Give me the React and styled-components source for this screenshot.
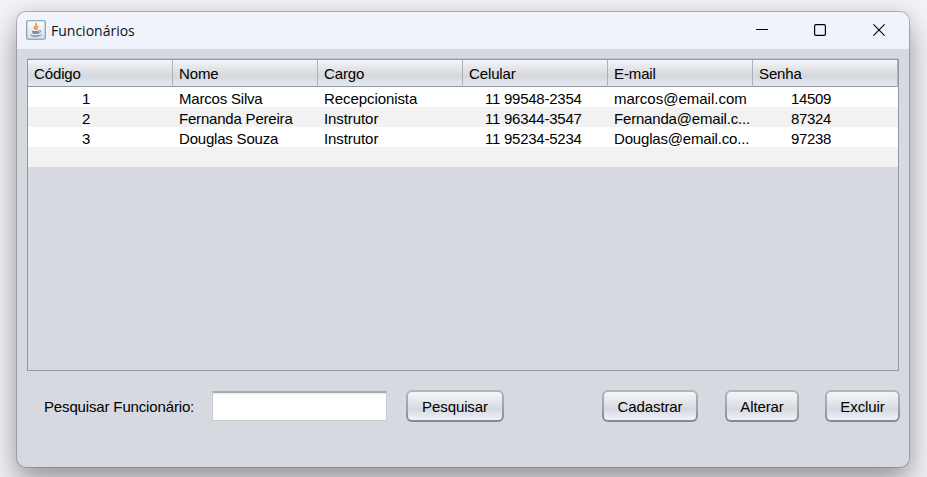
import React from "react";
import styled, { createGlobalStyle } from "styled-components";

const Global = createGlobalStyle`
  * { box-sizing: border-box; }
  html, body { margin: 0; padding: 0; overflow: hidden; }
  body { font-family: "Liberation Sans", Arial, sans-serif; font-size: 15px; color: #000; }
`;

const Desktop = styled.div`
  width: 927px;
  height: 477px;
  padding: 11px 17px 9px 16px;
  background: #f5f2f7;
  overflow: hidden;
`;

const Window = styled.main`
  height: 457px;
  width: 894px;
  display: flex;
  flex-direction: column;
  background: #d6d9e0;
  background-clip: padding-box;
  border: 1px solid rgba(110, 108, 114, 0.45);
  border-radius: 10px;
  overflow: hidden;
  box-shadow: 0 16px 30px rgba(0, 0, 0, 0.34), 0 0 18px rgba(0, 0, 0, 0.08);
`;

const TitleBar = styled.header`
  flex: none;
  height: 37px;
  padding: 0 16px 1px 9px;
  display: flex;
  align-items: center;
  background: #f0f3fb;
`;

const Title = styled.h1`
  margin: 0 auto 0 5px;
  padding-top: 2px;
  font: 400 14px/20px "Open Sans", "Noto Sans", sans-serif;
  color: #111;
`;

const WindowControls = styled.div`
  display: flex;
  gap: 30px;
`;

const ControlButton = styled.button`
  width: 28px;
  height: 28px;
  padding: 0 ${(p) => p.$nudge || 0}px 0 0;
  border: 0;
  background: none;
  display: grid;
  place-items: center;
  svg { display: block; }
`;

const Body = styled.section`
  flex: 1;
  padding: 10px 10px 0;
`;

const TablePane = styled.div`
  height: 312px;
  border: 1px solid #9297a1;
  box-shadow: 0 -1px 0 #c3c6ce;
  width: 872px;
`;

const COLUMNS = "145px 145px 145px 145px 145px 1fr";

const HeaderRow = styled.div`
  display: grid;
  grid-template-columns: ${COLUMNS};
  height: 27px;
  border-bottom: 1px solid #9297a1;
  background: linear-gradient(#f4f5f7 0%, #dfe1e5 40%, #d5d8dd 62%, #e6eaf3 100%);
`;

const HeaderCell = styled.div`
  padding: 1px 0 0 6px;
  line-height: 26px;
  letter-spacing: -0.12px;
  border-right: 1px solid #adb1b9;
`;

const Row = styled.div`
  display: grid;
  grid-template-columns: ${COLUMNS};
  height: 20px;
  background: ${(p) => (p.$striped ? "#f2f2f2" : "#fff")};
`;

const Cell = styled.div`
  padding: 3px 0 0 ${(p) => p.$indent || 6}px;
  line-height: 18px;
  height: 20px;
  white-space: pre;
  letter-spacing: ${(p) => p.$spacing || 0}px;
`;

const Footer = styled.form`
  display: flex;
  align-items: center;
  height: 32px;
  margin-top: 19px;
  width: 873px;
`;

const Label = styled.label`
  width: 185px;
  padding-left: 17px;
  white-space: nowrap;
  letter-spacing: -0.15px;
`;

const SearchInput = styled.input`
  width: 175px;
  height: 30px;
  margin: 0 19px 0 0;
  outline: 0;
  border: 1px solid #c9ccd1;
  border-top: 2px solid #a9acb1;
  border-radius: 0;
  background: linear-gradient(#e4e4e6, #fff 2px);
`;

const Button = styled.button`
  width: ${(p) => p.$width}px;
  height: 32px;
  margin-left: ${(p) => p.$gap || 0}px;
  padding: 1px 0 0;
  border: 2px solid transparent;
  border-radius: 6px;
  background:
    linear-gradient(#f5f6f8 0%, #e2e4e8 40%, #d6d9df 62%, #f0f3fb 100%) padding-box,
    linear-gradient(#b2b5ba, #9da0a6 60%, #84878d) border-box;
  font: 15px "Liberation Sans", Arial, sans-serif;
  letter-spacing: -0.1px;
  color: #000;
`;

const JavaIcon = () => (
  <svg width="20" height="20" viewBox="0 0 20 20">
    <defs>
      <linearGradient id="tile" x2="0" y2="1">
        <stop stopColor="#fdfdfe" />
        <stop offset="1" stopColor="#d5dee6" />
      </linearGradient>
    </defs>
    <rect x=".75" y=".75" width="18.5" height="18.5" rx="1.5" fill="url(#tile)" stroke="#7892a6" strokeWidth="1.1" />
    <path d="M9.3 9.7C5.8 6.7 11.1 5.8 9.7 2.8 12.6 5.4 8 6.7 9.3 9.7M10.5 9.9c2-1.5-.2-2.1 2-3.7-3.8 1.1-1.6 2-2 3.7" fill="#ef8d3a" stroke="#ef8d3a" strokeWidth=".9" />
    <path d="M5.8 10.4q3.8 1 7.4 0-.2 3.3-1.5 3.6H7.6Q6.1 13.5 5.8 10.4Z" fill="#7894ab" />
    <path d="M13 10.7c3-.6 2.2 2-.8 2.4M4.3 14.8c1.5 1.6 9.5 1.5 11.2-.2" fill="none" stroke="#6c8aa5" />
    <path d="M6 16.4q4 .7 7-.1" fill="none" stroke="#8ba2b6" strokeWidth=".8" />
  </svg>
);

const MinimizeIcon = () => (
  <svg width="12" height="12"><path d="M0 5.5h12" stroke="#000" strokeWidth="1" shapeRendering="crispEdges" /></svg>
);
const MaximizeIcon = () => (
  <svg width="12" height="12"><rect x=".6" y=".6" width="10.8" height="10.8" rx="1.3" fill="none" stroke="#000" strokeWidth="1.2" /></svg>
);
const CloseIcon = () => (
  <svg width="12" height="12"><path d="M.4.4l11.2 11.2M11.6.4L.4 11.6" stroke="#000" strokeWidth="1.1" /></svg>
);

const headers = ["Código", "Nome", "Cargo", "Celular", "E-mail", "Senha"];
const indents = [54, 6, 6, 22, 6, 38];
const spacings = [0, -0.2, -0.08, -0.25, 0, -0.35];
const employees = [
  ["1", "Marcos Silva", "Recepcionista", "11 99548-2354", "marcos@email.com", "14509"],
  ["2", "Fernanda Pereira", "Instrutor", "11 96344-3547", "Fernanda@email.c...", "87324"],
  ["3", "Douglas Souza", "Instrutor", "11 95234-5234", "Douglas@email.co...", "97238"],
  ["", "", "", "", "", ""],
];

const cellSpacing = (text, column) => (text.endsWith("...") ? -0.18 : spacings[column]);

export default function App() {
  return (
    <Desktop>
      <Global />
      <Window>
        <TitleBar>
          <JavaIcon />
          <Title>Funcionários</Title>
          <WindowControls>
            <ControlButton $nudge={2} aria-label="Minimizar"><MinimizeIcon /></ControlButton>
            <ControlButton $nudge={2} aria-label="Maximizar"><MaximizeIcon /></ControlButton>
            <ControlButton aria-label="Fechar"><CloseIcon /></ControlButton>
          </WindowControls>
        </TitleBar>
        <Body>
          <TablePane>
            <HeaderRow>
              {headers.map((h) => <HeaderCell key={h}>{h}</HeaderCell>)}
            </HeaderRow>
            {employees.map((row, r) => (
              <Row key={r} $striped={r % 2 === 1}>
                {row.map((text, c) => (
                  <Cell key={c} $indent={indents[c]} $spacing={cellSpacing(text, c)}>{text}</Cell>
                ))}
              </Row>
            ))}
          </TablePane>
          <Footer onSubmit={(e) => e.preventDefault()}>
            <Label htmlFor="busca">Pesquisar Funcionário:</Label>
            <SearchInput id="busca" />
            <Button $width={98}>Pesquisar</Button>
            <Button type="button" $width={96} $gap={98}>Cadastrar</Button>
            <Button type="button" $width={74} $gap={27}>Alterar</Button>
            <Button type="button" $width={75} $gap={26}>Excluir</Button>
          </Footer>
        </Body>
      </Window>
    </Desktop>
  );
}
